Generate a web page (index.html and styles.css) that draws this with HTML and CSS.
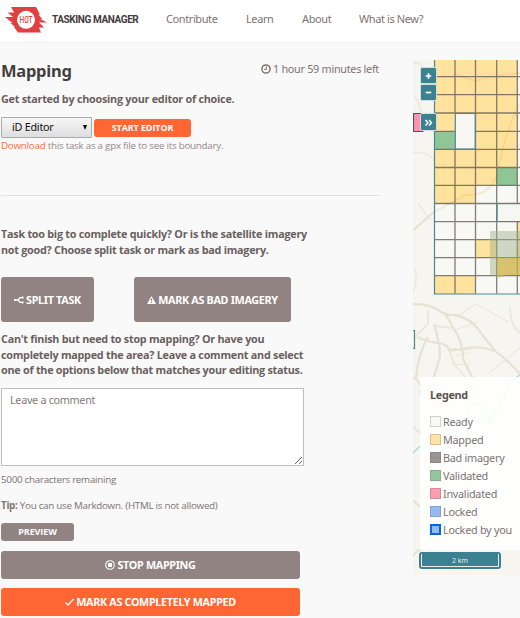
FILE: index.html
```html
<!DOCTYPE html>
<html lang="en">
<head>
<meta charset="utf-8">
<title>Tasking Manager</title>
<link rel="stylesheet" href="styles.css">
</head>
<body>
<header class="header">
  <svg class="logo" viewBox="0 0 42 26" width="42" height="26">
    <path fill="#df4040" d="M6 0H31L35 7.500H33.500L37 12H35.500L42 15.500H34L39 20.500H34L36 25.500H13L9 20H10L5.500 16H7.500L0 10H8L2.500 5.500H9Z"/>
    <circle cx="21" cy="12.800" r="9" fill="#fff"/>
    <text class="logo-text" x="14.500" y="16.200" textLength="13" lengthAdjust="spacingAndGlyphs">HOT</text>
  </svg>
  <span class="brand">TASKING MANAGER</span>
  <nav class="nav">
    <a class="nav-contribute">Contribute</a>
    <a class="nav-learn">Learn</a>
    <a class="nav-about">About</a>
    <a class="nav-new">What is New?</a>
  </nav>
</header>
<main class="page">
  <section class="panel">
    <div class="title-row">
      <h1>Mapping</h1>
      <div class="timer">
        <svg width="10" height="10" viewBox="0 0 10 10" fill="none" stroke="#7c7373"><circle cx="5" cy="5" r="4.100" stroke-width="1.500"/><path d="M5.300 2.500V5.400H3"/></svg>
        <span>1 hour 59 minutes left</span>
      </div>
    </div>
    <p class="lead intro">Get started by choosing your editor of choice.</p>
    <div class="editor-row">
      <div class="select"><span>iD Editor</span><i class="caret"></i></div>
      <button class="btn small start">START EDITOR</button>
    </div>
    <p class="download"><a>Download</a> this task as a gpx file to see its boundary.</p>
    <hr>
    <p class="lead">Task too big to complete quickly? Or is the satellite imagery<br>not good? Choose split task or mark as bad imagery.</p>
    <div class="split-row">
      <button class="btn tall split">
        <svg width="10" height="8" viewBox="0 0 10 8" fill="none" stroke="#fff"><path stroke-width="1.300" d="M0 4H4L6 1.700H9M4 4L6 6.300H9"/><path d="M8 .5H9.500V2.500H8ZM8 5.500H9.500V7.500H8Z" fill="#fff" stroke="none"/><path d="M0 3H2V5H0Z" fill="#fff" stroke="none"/></svg>
        <span>SPLIT TASK</span>
      </button>
      <button class="btn tall bad">
        <svg width="9" height="8" viewBox="0 0 9 8"><path fill="#fff" d="M4.500 0L9 8H0Z"/><path d="M4.500 2.500V5M4.500 5.700V6.900" stroke="#918382" stroke-width="1.300"/></svg>
        <span>MARK AS BAD IMAGERY</span>
      </button>
    </div>
    <p class="lead finish-copy">Can't finish but need to stop mapping? Or have you<br>completely mapped the area? Leave a comment and select<br>one of the options below that matches your editing status.</p>
    <textarea class="comment" placeholder="Leave a comment"></textarea>
    <p class="remaining">5000 characters remaining</p>
    <p class="tip"><b>Tip:</b> You can use Markdown. (HTML is not allowed)</p>
    <button class="btn small preview">PREVIEW</button>
    <button class="btn wide stop">
      <svg width="10" height="10" viewBox="0 0 10 10"><circle cx="5" cy="5" r="4.300" fill="none" stroke="#fff" stroke-width="1.100"/><path fill="#fff" d="M3 3H7V7H3Z"/></svg>
      <span>STOP MAPPING</span>
    </button>
    <button class="btn wide complete">
      <svg width="9" height="8" viewBox="0 0 9 8" fill="none" stroke="#fff" stroke-width="1.300"><path d="M.5 4.500L3 7L8.500 1"/></svg>
      <span>MARK AS COMPLETELY MAPPED</span>
    </button>
  </section>
  <aside class="map">
    <svg class="canvas" width="107" height="515" viewBox="413 60 107 515">
      <path fill="#f7f5f0" d="M413 60H520V575H413Z"/>
      <g fill="none" stroke="#e8e2d3" stroke-width="1.500">
        <path d="M413 63Q421 62 424 68M414 95Q422 105 422 120M413 153Q425 151 431 157T452 154M418 203L430 220M414 267Q419 280 413 292" opacity=".7"/>
        <path stroke-width="2.300" d="M413 230Q425 220 434 212M413 304Q430 304 438 310T455 315Q470 318 478 329T496 352Q507 359 520 374M417 337Q428 342 438 343T449 350Q458 350 470 348T494 351M445 313Q452 326 458 336Q464 350 463 359Q468 370 473 378M434 324Q440 343 440 356L434 377M428 337Q418 354 416 378"/>
        <path stroke-width="1.800" d="M413 338L428 324V310M436 326L452 328M449 350L454 364L466 378M510 308Q510 325 520 333" opacity=".8"/>
        <path stroke-width="1.200" d="M455 330L478 322M457 317L475 304L500 317L509 322M451 364L470 365M456 356L469 352M489 373L520 348" opacity=".7"/>
        <path stroke-width="2" d="M413 377Q425 386 419 393M413 427L420 433M413 500L420 507M413 556Q420 546 431 550"/>
      </g>
      <path d="M413 453Q425 439 440 442T466 417T490 422L504 397Q506 383 520 375" fill="none" stroke="#a9dada" stroke-width="1.200"/>
      <path fill="#f8f8f5" d="M434.500 60H520V294H434.500Z"/>
      <path fill="#ffe29c" d="M434.500 60H517V167.500H434.500ZM434.500 167.500H496.500V185.500H434.500ZM434.500 185.500H475.500V203.500H434.500ZM475.500 239.500H496.500V257.500H475.500ZM496.500 257.500H517V275.500H496.500ZM517 221.500H520V275.500H517ZM434.500 275.500H475.500V294H434.500Z"/>
      <path fill="#f7f6f3" d="M455.500 113.500H475.500V149H455.500ZM497 204H520V221H497Z"/>
      <path fill="#90c696" d="M434.500 131.500H455V149.500H434.500ZM496.500 167.500H517V185.500H496.500Z"/>
      <path d="M455 74L475 81L500 75L520 73M520 103Q504 135 499 166T465 195L434 212" fill="none" stroke="#dbae68" stroke-width="2" opacity=".2"/>
      <path d="M455 60V113M455 149V293.500M475.500 60V293.500M496.700 60V293.500M517.300 60V203.500M517.300 221.500V293.500M434.500 76.700H520M434.500 94.700H520M434.500 113H520M434.500 131.300H455M475.500 131.300H520M434.500 149.300H520M434.500 167.500H520M434.500 185.400H520M434.500 203.500H520M434.500 221.600H520M434.500 239.600H520M434.500 257.700H520M434.500 275.700H520" stroke="#5c5850" stroke-opacity=".76" stroke-width="1.300" fill="none"/>
      <path stroke="#4c8797" stroke-width="1.200" fill="none" d="M434.500 60V294H520M455.300 113.500H475.300V149H455.300ZM520 203.500H497V221.500H520M413 330.500H414.500V348.500H413"/>
      <path d="M490 231H520V275H506Q499 280 493 275H490Z" fill="#9eae8a" opacity=".46"/>
      <path d="M497 258H520V275H506L497 277Z" fill="#dfb83c" opacity=".45"/>
      <path d="M413.500 113.500H423V131.500H413.500Z" fill="#fc94ad" stroke="#4e5269" stroke-width="1.200"/>
    </svg>
    <div class="controls">
      <div class="control"><svg width="15" height="15" viewBox="0 0 15 15" stroke="#fff" stroke-width="1.700"><path d="M4.700 8H10.300M7.500 5.200V10.800"/></svg></div>
      <div class="control"><svg width="15" height="15" viewBox="0 0 15 15" stroke="#fff" stroke-width="1.700"><path d="M4.700 7.500H10.300"/></svg></div>
      <div class="control more"><svg width="15" height="15" viewBox="0 0 15 15" fill="none" stroke="#fff" stroke-width="1.500"><path d="M4.500 5L7 7.800L4.500 10.600M8 5L10.500 7.800L8 10.600"/></svg></div>
    </div>
    <div class="legend">
      <h2>Legend</h2>
      <ul>
        <li><i class="ready"></i>Ready</li>
        <li><i class="mapped"></i>Mapped</li>
        <li><i class="badimg"></i>Bad imagery</li>
        <li><i class="validated"></i>Validated</li>
        <li><i class="invalid"></i>Invalidated</li>
        <li><i class="locked"></i>Locked</li>
        <li><i class="mine"></i>Locked by you</li>
      </ul>
    </div>
    <div class="scale"><span>2 km</span></div>
  </aside>
</main>
</body>
</html>
```
FILE: styles.css
```css
* { box-sizing: border-box; }
html, body { height: 100%; overflow: hidden; }
body { margin: 0; background: #f9f9f9; color: #7c7373; font-family: "Open Sans", "Noto Sans", sans-serif; }
h1, h2, p, ul { margin: 0; padding: 0; }
svg { display: block; flex: none; }
.header { height: 43px; background: #fff; border-bottom: 1px solid #f1f1f1; display: flex; align-items: flex-start; white-space: nowrap; }
.logo { margin: 7px 0 0 5px; }
.logo-text { font: 500 9.500px Roboto, sans-serif; fill: #df4040; }
.brand { margin-left: 5px; width: 87px; line-height: 16px; margin-top: 12px; font-family: Roboto, sans-serif; font-weight: 700; font-size: 10px; letter-spacing: -.4px; color: #433b3a; }
.nav { display: flex; margin-left: 27px; padding-top: 11px; font: 11px/16px "Noto Sans", sans-serif; letter-spacing: -.4px; }
.nav a { white-space: nowrap; }
.nav-contribute { width: 80px; }
.nav-learn { width: 56px; }
.nav-about { width: 57px; }
.page { display: flex; height: 575px; }
.panel { width: 413px; flex: none; padding: 17px 34px 0 1px; }
.title-row { display: flex; justify-content: space-between; height: 23px; }
h1 { font: 700 16.500px/22px "Noto Sans", sans-serif; letter-spacing: -.25px; color: #443f3f; }
.timer { display: flex; align-items: center; gap: 2px; height: 18px; font: 10.800px/18px "Noto Sans", sans-serif; letter-spacing: -.27px; white-space: nowrap; }
.lead { font-weight: 700; font-size: 10.800px; line-height: 15.500px; letter-spacing: -.25px; color: #695f5f; white-space: nowrap; }
.intro { margin-top: 8px; }
.editor-row { display: flex; align-items: flex-start; gap: 2px; margin-top: 10.500px; }
.select { width: 91px; height: 21px; border: 1px solid #aaa; border-radius: 1px; background: linear-gradient(#f7f7f7, #dedede); display: flex; align-items: center; justify-content: space-between; padding: 0 4px 0 10px; color: #111; font: 10.800px/18px "Noto Sans", sans-serif; letter-spacing: -.25px; }
.select span { margin-top: -1px; }
.caret { border: 2.500px solid transparent; border-top: 5px solid #000; border-bottom: 0; }
.btn { display: flex; align-items: center; justify-content: center; border: 0; border-radius: 3px; padding: 0; margin: 0; background: #918382; color: #fff; font: 700 10.800px/16px "Noto Sans", sans-serif; letter-spacing: -.32px; white-space: nowrap; gap: 2px; }
.small { font: 700 9px/14px "Open Sans", sans-serif; letter-spacing: -.1px; height: 18px; }
.start { width: 97px; background: #ff6633; margin-top: 2px; }
.download { font-size: 9.800px; line-height: 14px; margin-top: 1px; white-space: nowrap; letter-spacing: -.25px; color: #938989; }
.download a { color: #ff6b47; }
hr { height: 1px; border: 0; background: #e2e0e0; margin: 41.500px 0 30.500px; }
.split-row { display: flex; gap: 39px; margin-top: 20px; }
.tall { height: 45px; }
.split { width: 93px; margin-right: 1px; }
.bad { width: 157px; }
.finish-copy { margin-top: 9px; }
.comment { display: block; width: 303px; height: 78px; margin-top: 10px; padding: 3px 8px; border: 1px solid #c4bfbf; background: #fff; font: 10.800px/16px "Noto Sans", sans-serif; letter-spacing: -.3px; border-radius: 0; resize: both; }
.comment::placeholder { color: #837b7b; }
.remaining, .tip { font-size: 9.800px; line-height: 14px; letter-spacing: -.27px; white-space: nowrap; }
.remaining { margin-top: 7px; }
.tip { margin-top: 12px; }
.preview { width: 73px; margin-top: 10px; }
.wide { width: 299px; height: 28px; }
.stop { margin-top: 10px; }
.complete { margin-top: 9px; background: #ff6633; }
.map { position: relative; width: 107px; height: 515px; margin-top: 17px; overflow: hidden; }
.controls { position: absolute; left: 7px; top: 7px; }
.control { width: 17px; height: 17px; border: 1px solid #cde0df; background: #3c8190; border-radius: 2px; display: flex; align-items: center; justify-content: center; }
.more { margin-top: 12px; height: 18px; }
.legend { position: absolute; left: 7px; top: 317px; width: 100px; height: 173px; background: rgba(255, 255, 255, .87); padding: 10px 0 0 10px; white-space: nowrap; }
.legend h2 { font: 700 10.800px/16px "Noto Sans", sans-serif; letter-spacing: -.3px; color: #5d5353; }
.legend ul { list-style: none; margin-top: 10px; }
.legend li { display: flex; align-items: center; gap: 2px; height: 18px; font: 10.800px/18px "Noto Sans", sans-serif; letter-spacing: -.25px; }
.legend i { width: 11px; height: 11px; margin-top: -2px; border: 1px solid rgba(100, 90, 80, .25); }
.ready { background: #f8f8f6; }
.mapped { background: #ffe2a5; }
.badimg { background: #969794; }
.validated { background: #92c7a0; }
.invalid { background: #fb9daf; }
.locked { background: #95b9f5; }
.legend .mine { background: #95b9f5; border: 2px solid #0864e4; }
.scale { position: absolute; left: 6px; top: 492px; width: 82px; height: 17px; padding: 2px; border-radius: 3px; background: #3c8190; color: #e3eeee; font: 7px/12px "Noto Sans", sans-serif; text-align: center; }
.scale span { display: block; height: 13px; line-height: 13px; border: 1px solid #eee; border-top: 0; }
```
